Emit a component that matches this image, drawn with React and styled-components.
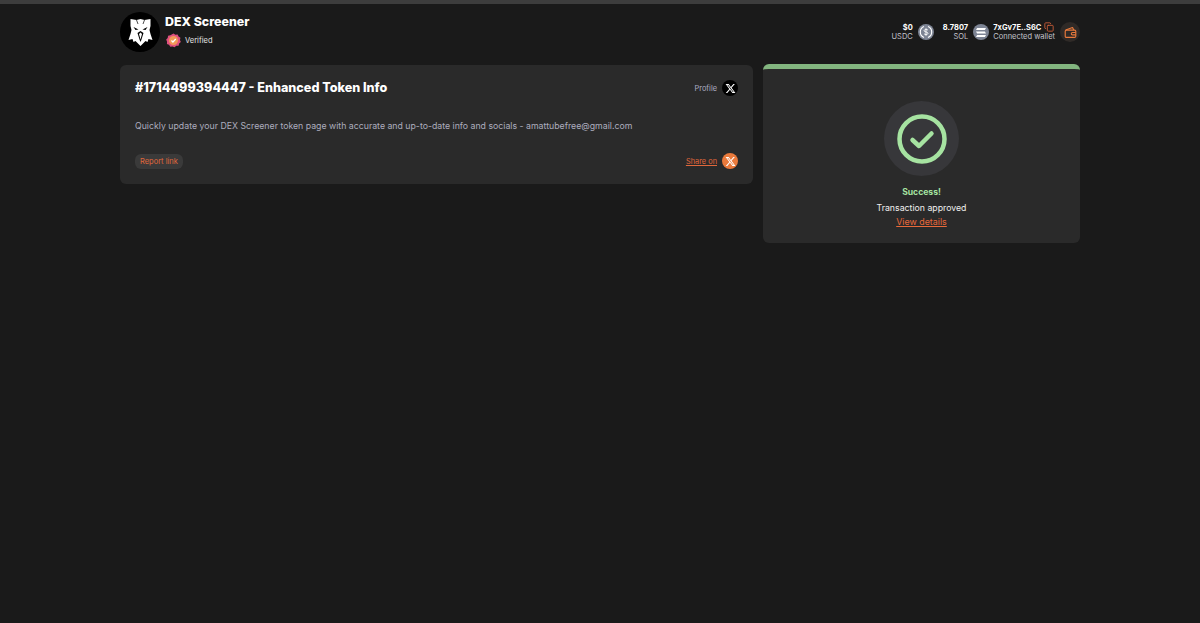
import React from 'react';
import styled, { createGlobalStyle } from 'styled-components';
import { Copy } from 'lucide-react';

const GlobalStyle = createGlobalStyle`
  html, body {
    margin: 0;
    background: #1a1a1a;
    font-family: Inter, "Liberation Sans", sans-serif;
  }
  body {
    min-height: 623px;
    overflow: hidden;
  }
`;

const TopStrip = styled.div`
  background: #3d3d3d;
  height: 4px;
`;

const Page = styled.div`
  margin: 0 auto;
  width: 960px;
`;

const Header = styled.header`
  align-items: center;
  display: flex;
  height: 40px;
  justify-content: space-between;
  padding-top: 8px;
`;

const Brand = styled.div`
  align-items: center;
  display: flex;
  gap: 5px;
`;

const Logo = styled.div`
  align-items: center;
  background: #000;
  border-radius: 50%;
  display: flex;
  height: 40px;
  justify-content: center;
  width: 40px;
`;

const BrandName = styled.div`
  color: #fff;
  font-size: 12.4px;
  font-weight: 800;
  line-height: 18px;
  margin-bottom: 2px;
  margin-top: -4px;
`;

const VerifiedRow = styled.div`
  align-items: center;
  color: #e4e4e4;
  display: flex;
  font-size: 7.5px;
  gap: 4px;
  margin-left: 1px;
`;

const WalletBar = styled.div`
  align-items: center;
  display: flex;
  gap: 9px;
`;

const Balance = styled.div`
  align-items: center;
  display: flex;
  gap: 5px;
`;

const WalletGroup = styled.div`
  align-items: center;
  display: flex;
  gap: 5px;
  margin-left: -5px;
`;

const Stack = styled.div`
  color: #c4c4cc;
  font-size: 7.5px;
  line-height: 9px;
  margin-top: ${(props) => props.$lift || 0}px;
  text-align: ${(props) => props.$align || 'right'};
`;

const Strong = styled.div`
  align-items: center;
  color: #fff;
  display: flex;
  font-size: 7.5px;
  font-weight: 700;
  gap: 3px;
  justify-content: ${(props) => props.$justify || 'flex-end'};
`;

const CoinIcon = styled.div`
  align-items: center;
  background: #7d8494;
  border-radius: 50%;
  display: flex;
  height: 16px;
  justify-content: center;
  width: 16px;
`;

const WalletButton = styled.div`
  align-items: center;
  background: #2f2a27;
  border-radius: 50%;
  display: flex;
  height: 20px;
  justify-content: center;
  width: 20px;
`;

const Columns = styled.main`
  align-items: flex-start;
  display: flex;
  gap: 10px;
  margin-top: 12px;
`;

const InfoCard = styled.section`
  background: #2a2a2a;
  border-radius: 6px;
  box-sizing: border-box;
  height: 119px;
  margin-top: 1px;
  padding: 13px 15px 15px;
  width: 633px;
`;

const CardRow = styled.div`
  align-items: center;
  display: flex;
  justify-content: space-between;
`;

const Title = styled.h1`
  color: #fff;
  font-size: 12.6px;
  font-weight: 800;
  line-height: 20px;
  margin: 0;
`;

const Description = styled.p`
  color: #adadbe;
  font-size: 8.75px;
  line-height: 12px;
  margin: 22px 0 21px;
`;

const SideLink = styled.div`
  align-items: center;
  color: #adadc2;
  display: flex;
  font-size: 7.4px;
  gap: 5px;
`;

const ShareText = styled.span`
  color: #e0683c;
  text-decoration: underline;
`;

const XBadge = styled.div`
  align-items: center;
  background: ${(props) => props.$bg};
  border-radius: 50%;
  display: flex;
  height: 16px;
  justify-content: center;
  width: 16px;
`;

const ReportPill = styled.div`
  background: #3a3a3a;
  border-radius: 6px;
  color: #e0683c;
  font-size: 7.5px;
  line-height: 15px;
  padding: 0 5px;
`;

const StatusCard = styled.aside`
  align-items: center;
  background: #2a2a2a;
  border-radius: 6px;
  border-top: 5px solid #82b57f;
  box-sizing: border-box;
  display: flex;
  flex-direction: column;
  height: 179px;
  padding-top: 32px;
  width: 317px;
`;

const CheckHalo = styled.div`
  align-items: center;
  background: #37373a;
  border-radius: 50%;
  display: flex;
  height: 75px;
  justify-content: center;
  margin-bottom: 8px;
  width: 75px;
`;

const StatusTitle = styled.div`
  color: #a6e3a1;
  font-size: 8.6px;
  font-weight: 700;
  line-height: 16px;
`;

const StatusText = styled.div`
  color: #f0f0f0;
  font-size: 8.75px;
  line-height: 14px;
  margin-top: 1px;
`;

const DetailsLink = styled.a`
  color: #e8693a;
  font-size: 8.9px;
  line-height: 15px;
  margin-top: -1px;
  text-decoration: underline;
`;

function XGlyph({ color }) {
  return (
    <svg width='11' height='11' viewBox='0 0 24 24' fill={color}>
      <path d='M18.24 2.25h3.31l-7.23 8.26 8.5 11.24h-6.66l-5.21-6.82-5.97 6.82H1.68l7.73-8.84L1.25 2.25h6.83l4.71 6.23 5.45-6.23zm-1.16 17.52h1.83L7.08 4.13H5.12l11.96 15.64z' />
    </svg>
  );
}

function EagleLogo() {
  return (
    <svg width='25' height='28' viewBox='0 0 24 28' fill='#fff'>
      <path d='M2 1 L8 2 L12 1 L16 2 L22 1 L22 8 L21 12 L22 16 L24 22 L20 21 L19 24 L17 23 L12 28 L7 23 L5 24 L4 21 L0 22 L2 16 L3 12 L2 8 Z' />
      <path d='M5 9 L10 11.5 L7 12 Z M19 9 L14 11.5 L17 12 Z' fill='#000' />
      <path d='M12 13 L9 15 L11.2 22 L12 24 L12.8 22 L15 15 Z' fill='#000' />
      <path d='M12 14.5 L10.5 16 L12 21.5 L13.5 16 Z' />
      <path d='M8 2 L9.5 6 M16 2 L14.5 6' stroke='#000' strokeWidth='0.7' fill='none' />
    </svg>
  );
}

function VerifiedBadge() {
  return (
    <svg width='15' height='15' viewBox='0 0 16 16'>
      <path
        d='M8 0.5 L10 1.8 L12.4 1.6 L13.4 3.8 L15.4 5 L14.9 7.4 L15.8 9.6 L14 11.2 L13.4 13.5 L11 13.7 L9.1 15.3 L7 14.3 L4.6 14.6 L3.2 12.6 L1 11.6 L1.1 9.2 L0.2 7 L1.8 5.2 L2.2 2.8 L4.6 2.4 Z'
        fill='#e0507f'
      />
      <circle cx='8' cy='8' r='4.8' fill='#f39a58' />
      <path d='M5.8 8 L7.4 9.6 L10.4 6.4' fill='none' stroke='#fff' strokeWidth='1.3' />
    </svg>
  );
}

function UsdcIcon() {
  return (
    <svg width='16' height='16' viewBox='0 0 16 16' fill='none' stroke='#fff'>
      <path d='M6 2.6 A5.8 5.8 0 0 0 6 13.4 M10 2.6 A5.8 5.8 0 0 1 10 13.4' strokeWidth='1.1' />
      <path d='M10 6.3 C9.7 5.3 6.2 5 6.1 6.7 C6 8.5 10 7.4 10 9.3 C10 11 6.3 10.8 6 9.6 M8 4.2 V11.8' strokeWidth='0.9' />
    </svg>
  );
}

function SolIcon() {
  return (
    <svg width='10' height='9' viewBox='0 0 9 8' fill='#fff'>
      <path d='M1 0 H9 L8 1.8 H0 Z M0 3.1 H8 L9 4.9 H1 Z M1 6.2 H9 L8 8 H0 Z' />
    </svg>
  );
}

function WalletIcon() {
  return (
    <svg width='13' height='13' viewBox='0 0 16 16' fill='none' stroke='#ea7a3c' strokeWidth='1.4'>
      <path d='M2 5 L10.5 1.8 L12 5' strokeLinejoin='round' />
      <rect x='1.5' y='5' width='13' height='9' rx='1.5' />
      <path d='M14.5 8 H10.5 A1.5 1.5 0 0 0 10.5 11 H14.5' />
    </svg>
  );
}

function App() {
  return (
    <>
      <GlobalStyle />
      <TopStrip />
      <Page>
        <Header>
          <Brand>
            <Logo>
              <EagleLogo />
            </Logo>
            <div>
              <BrandName>DEX Screener</BrandName>
              <VerifiedRow>
                <VerifiedBadge />
                Verified
              </VerifiedRow>
            </div>
          </Brand>
          <WalletBar>
            <Balance>
              <Stack>
                <Strong>$0</Strong>
                USDC
              </Stack>
              <CoinIcon>
                <UsdcIcon />
              </CoinIcon>
            </Balance>
            <Balance>
              <Stack>
                <Strong>8.7807</Strong>
                SOL
              </Stack>
              <CoinIcon>
                <SolIcon />
              </CoinIcon>
            </Balance>
            <WalletGroup>
              <Stack $align='left' $lift={-1}>
                <Strong $justify='flex-start'>
                  7xGv7E..S6C
                  <Copy size={10} color='#d9633b' strokeWidth={2} />
                </Strong>
                Connected wallet
              </Stack>
              <WalletButton>
                <WalletIcon />
              </WalletButton>
            </WalletGroup>
          </WalletBar>
        </Header>
        <Columns>
          <InfoCard>
            <CardRow>
              <Title>#1714499394447 - Enhanced Token Info</Title>
              <SideLink>
                Profile
                <XBadge $bg='#000'>
                  <XGlyph color='#fff' />
                </XBadge>
              </SideLink>
            </CardRow>
            <Description>
              Quickly update your DEX Screener token page with accurate and up-to-date info and socials - amattubefree@gmail.com
            </Description>
            <CardRow>
              <ReportPill>Report link</ReportPill>
              <SideLink>
                <ShareText>Share on</ShareText>
                <XBadge $bg='#ea7a3c'>
                  <XGlyph color='#fff' />
                </XBadge>
              </SideLink>
            </CardRow>
          </InfoCard>
          <StatusCard>
            <CheckHalo>
              <svg width='50' height='50' viewBox='0 0 50 50' fill='none' stroke='#a6e3a1' strokeWidth='4.5'>
                <circle cx='25' cy='25' r='22.5' />
                <path d='M15.5 26 L22 32 L34.5 19.5' strokeLinecap='round' strokeLinejoin='round' />
              </svg>
            </CheckHalo>
            <StatusTitle>Success!</StatusTitle>
            <StatusText>Transaction approved</StatusText>
            <DetailsLink href='#'>View details</DetailsLink>
          </StatusCard>
        </Columns>
      </Page>
    </>
  );
}

export default App;
